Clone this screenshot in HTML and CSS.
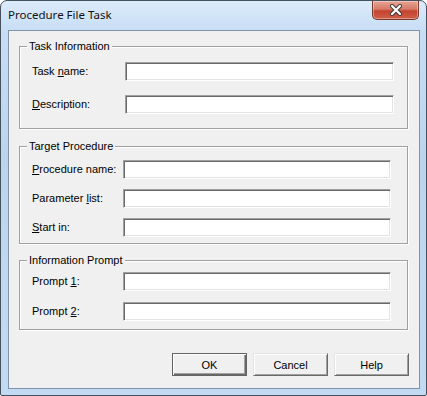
FILE: index.html
```html
<!DOCTYPE html>
<html lang="en">
<head>
    <meta charset="UTF-8">
    <title>Procedure File Task</title>
    <link rel="stylesheet" href="styles.css">
</head>
<body>
    <div class="window">
        <div class="titlebar">
            <span class="title">Procedure File Task</span>
            <button class="close-btn" type="button" aria-label="Close">
                <svg width="14" height="12" viewBox="0 0 14 12">
                    <path d="M3 2 L11 10 M11 2 L3 10" stroke="#3b3b3b" stroke-width="4" stroke-linecap="round"/>
                    <path d="M3 2 L11 10 M11 2 L3 10" stroke="#ffffff" stroke-width="2.2" stroke-linecap="round"/>
                </svg>
            </button>
        </div>

        <div class="client">
            <fieldset class="group group-task">
                <legend>Task Information</legend>
                <div class="field">
                    <label>Task <u>n</u>ame:</label>
                    <input type="text" class="edit">
                </div>
                <div class="field">
                    <label><u>D</u>escription:</label>
                    <input type="text" class="edit">
                </div>
            </fieldset>

            <fieldset class="group group-target">
                <legend>Target Procedure</legend>
                <div class="field">
                    <label><u>P</u>rocedure name:</label>
                    <input type="text" class="edit">
                </div>
                <div class="field">
                    <label>Parameter <u>l</u>ist:</label>
                    <input type="text" class="edit">
                </div>
                <div class="field">
                    <label><u>S</u>tart in:</label>
                    <input type="text" class="edit">
                </div>
            </fieldset>

            <fieldset class="group group-prompt">
                <legend>Information Prompt</legend>
                <div class="field">
                    <label>Prompt <u>1</u>:</label>
                    <input type="text" class="edit">
                </div>
                <div class="field">
                    <label>Prompt <u>2</u>:</label>
                    <input type="text" class="edit">
                </div>
            </fieldset>

            <div class="buttons">
                <button class="btn btn-default" type="button">OK</button>
                <button class="btn" type="button">Cancel</button>
                <button class="btn" type="button">Help</button>
            </div>
        </div>
    </div>
</body>
</html>
```

FILE: styles.css
```css
* {
    margin: 0;
    padding: 0;
    box-sizing: border-box;
}

body {
    width: 427px;
    height: 396px;
    overflow: hidden;
    background: #ffffff;
    font-family: 'Liberation Sans', Arial, sans-serif;
    font-size: 11px;
    color: #000000;
}

/* window frame */
.window {
    width: 427px;
    height: 396px;
    border: 1px solid #46515e;
    border-radius: 7px 7px 2px 2px;
    background: linear-gradient(180deg, #dcebfa 0%, #c6ddf5 8%, #bcd5ef 40%, #c3daf3 100%);
    padding: 0 6px 6px 7px;
    display: flex;
    flex-direction: column;
}

.titlebar {
    height: 29px;
    display: flex;
    align-items: flex-start;
    flex-shrink: 0;
}

.title {
    font-family: 'Noto Sans', 'Open Sans', sans-serif;
    font-size: 11.5px;
    color: #111111;
    padding-top: 6px;
    line-height: 16px;
}

.close-btn {
    margin-left: auto;
    margin-right: 1px;
    width: 47px;
    height: 19px;
    border: 1px solid #7b3a30;
    border-top: none;
    border-radius: 0 0 5px 5px;
    background: linear-gradient(180deg, #e8a596 0%, #d67a68 45%, #c4442f 55%, #cf5f48 100%);
    box-shadow: inset 0 0 0 1px rgba(255, 255, 255, 0.35);
    display: flex;
    align-items: center;
    justify-content: center;
}

/* client area */
.client {
    flex: 1;
    background: #f0f0f0;
    border: 1px solid #8193a8;
    padding: 9px 10px 0 10px;
    display: flex;
    flex-direction: column;
}

.group {
    border: 1px solid #a0a0a0;
    box-shadow: inset 1px 1px #ffffff, 1px 1px #ffffff;
    min-width: 0;
    margin-right: 1px;
    display: flex;
    flex-direction: column;
}

.group legend {
    margin-left: -5px;
    padding: 0 2px;
    line-height: 13px;
    background: #f0f0f0;
}

.group-task {
    padding: 9px 12px 14px 12px;
    gap: 14px;
}

.group-target {
    margin-top: 11px;
    padding: 7px 15px 6px 12px;
    gap: 10px;
}

.group-prompt {
    margin-top: 10px;
    padding: 5px 15px 8px 12px;
    gap: 11px;
}

.field {
    display: grid;
    align-items: center;
    height: 19px;
}

.group-task .field {
    grid-template-columns: 93px 269px;
}

.group-target .field,
.group-prompt .field {
    grid-template-columns: 91px 268px;
}

.field label {
    line-height: 13px;
    white-space: nowrap;
}

.edit {
    height: 19px;
    background: #ffffff;
    border: 1px solid;
    border-color: #a0a0a0 #ffffff #ffffff #a0a0a0;
    box-shadow: inset 1px 1px #696969, inset -1px -1px #e3e3e3;
    outline: none;
}

/* dialog buttons */
.buttons {
    margin-top: 23px;
    display: flex;
    justify-content: flex-end;
    gap: 6px;
}

.btn {
    width: 75px;
    height: 23px;
    font-family: 'Liberation Sans', Arial, sans-serif;
    font-size: 11px;
    color: #000000;
    background: #f0f0f0;
    border: 1px solid;
    border-color: #e3e3e3 #696969 #696969 #e3e3e3;
    box-shadow: inset 1px 1px #ffffff, inset -1px -1px #a0a0a0;
}

.btn-default {
    border-color: #646464;
    box-shadow: inset 1px 1px #ffffff, inset -1px -1px #696969, inset -2px -2px #a0a0a0;
}
```
